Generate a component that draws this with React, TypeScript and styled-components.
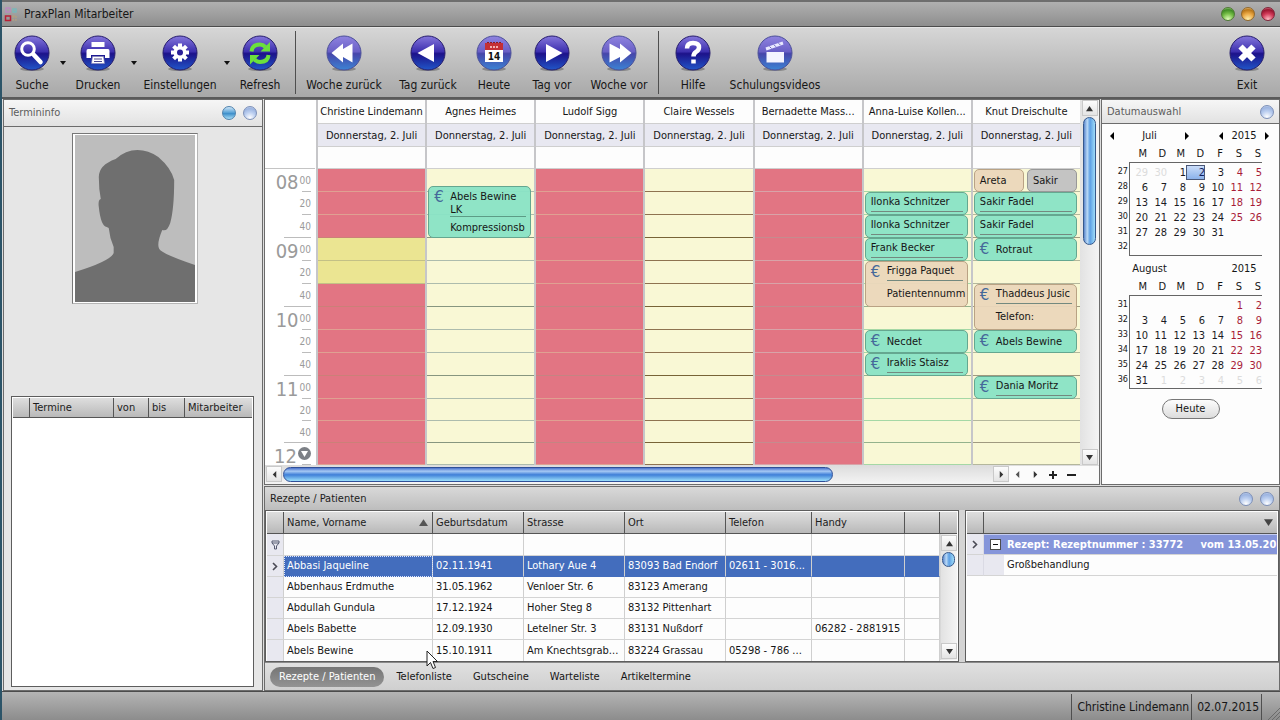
import React from "react";
import styled, { createGlobalStyle, css } from "styled-components";

const UI_FONT = '"DejaVu Sans Condensed", "DejaVu Sans", "Noto Sans", sans-serif';

const GlobalStyle = createGlobalStyle`
  *, *::before, *::after { box-sizing: border-box; }
  body { margin: 0; background: #2c5468; }
  body, button, input, table { font-family: ${UI_FONT}; font-size: 11px; color: #161616; }
  button { margin: 0; padding: 0; border: 0; background: none; }
  h1, h2, p { margin: 0; font-weight: normal; font-size: 11px; }
  table { border-collapse: separate; border-spacing: 0; }
  th, td { padding: 0; font-weight: normal; text-align: left; }
`;

/* ---------- frame ---------- */

const Window = styled.div`
  position: relative;
  display: flex;
  flex-direction: column;
  min-height: 100vh;
  margin-left: 2px;
  background: #dedede;
`;

const TitleBar = styled.header`
  display: flex;
  align-items: center;
  gap: 6px;
  height: 27px;
  padding: 0 5px 0 1px;
  border-top: 2px solid #6e6e6e;
  border-bottom: 1px solid #4c4c4c;
  background: linear-gradient(#b0b0b0, #8e8e8e);
`;

const AppTitle = styled.h1`
  flex: 1;
  font-size: 12px;
  line-height: 18px;
`;

const WindowButtons = styled.div`
  display: flex;
  gap: 6px;
`;

const Ball = styled.button<{ $tone: "green" | "amber" | "red" | "blue" | "pale" }>`
  width: 14px;
  height: 14px;
  border-radius: 50%;
  ${({ $tone }) =>
    ({
      green: css`border: 1px solid #4f7a35; background: radial-gradient(circle at 50% 95%, #e6ffc0, #77bf48 45%, #3f8a25 75%, #bfe8a0);`,
      amber: css`border: 1px solid #91682c; background: radial-gradient(circle at 50% 95%, #fff2b0, #eba945 45%, #b87518 75%, #ffe2a8);`,
      red: css`border: 1px solid #80263a; background: radial-gradient(circle at 50% 95%, #ffc0c8, #d23c5a 45%, #99152f 75%, #f4a0b0);`,
      blue: css`border: 1px solid #5083ad; background: linear-gradient(#cfe6f8, #5da5d8 45%, #3f8fca 55%, #a8def8);`,
      pale: css`border: 1px solid #7d90b8; background: radial-gradient(circle at 50% 90%, #ffffff, #bccff0 45%, #9cb4e0 75%, #dde8fa);`,
    })[$tone]}
`;

/* ---------- toolbar ---------- */

const ToolBar = styled.nav`
  display: flex;
  height: 72px;
  padding: 0 8px 0 6px;
  border-top: 1px solid #e6e6e6;
  border-bottom: 2px solid #5a5a5a;
  background: linear-gradient(#d6d6d6, #a8a8a8);
`;

const ToolButton = styled.button<{ $width: number }>`
  display: flex;
  flex-direction: column;
  align-items: center;
  gap: 5px;
  width: ${({ $width }) => $width}px;
  padding-top: 7px;
  font-size: 12px;
  line-height: 16px;
  white-space: nowrap;
`;

const DropButton = styled.button`
  display: flex;
  align-items: center;
  justify-content: center;
  width: 13px;
`;

const ToolDivider = styled.div`
  width: 1px;
  margin: 3px 8px;
  background: #4f4f4f;
`;

const Spacer = styled.div`
  flex: 1;
`;

const Orb = ({ light, children }: { light?: boolean; children: React.ReactNode }) => {
  const id = React.useId();
  return (
    <svg width="36" height="37" viewBox="0 0 36 37" aria-hidden="true">
      <defs>
        <linearGradient id={id} x1="0" y1="0" x2="0" y2="1">
          <stop offset="0" stopColor={light ? "#8f83e0" : "#8577dc"} />
          <stop offset="0.46" stopColor={light ? "#6a60c6" : "#3c2fae"} />
          <stop offset="0.52" stopColor={light ? "#4646aa" : "#1c128a"} />
          <stop offset="1" stopColor={light ? "#3c83d4" : "#2156c8"} />
        </linearGradient>
      </defs>
      <ellipse cx="18" cy="34" rx="12" ry="2" fill="#555" opacity="0.5" />
      <circle cx="18" cy="18" r="17" fill={`url(#${id})`} stroke={light ? "#4c5099" : "#261d6c"} />
      {children}
    </svg>
  );
};

const Caret = () => (
  <svg width="6" height="4" viewBox="0 0 6 4" aria-hidden="true">
    <path d="M0 0H6L3 4Z" fill="#111" />
  </svg>
);

const SearchGlyph = () => (
  <g fill="none" stroke="#fff" strokeLinecap="round">
    <circle cx="14" cy="14" r="6.300" strokeWidth="3" />
    <path d="M19.500 19.500L26.500 27" strokeWidth="4.500" />
  </g>
);
const PrintGlyph = () => (
  <g>
    <path d="M11.500 7H24.500V12H11.500Z" fill="#fff" />
    <path d="M8 14H28Q29.500 14 29.500 16V23H25V20H11V23H6.500V16Q6.500 14 8 14Z" fill="#fff" />
    <path d="M12.500 21.500H23.500L24.500 28.500H11.500Z" fill="#fff" stroke="#8a86b8" strokeWidth="0.600" />
    <path d="M14 24H22M14 26.500H22" stroke="#4a4790" />
  </g>
);
const GearGlyph = () => (
  <g>
    <g stroke="#fff" strokeWidth="4">
      <path d="M18 8.500V26.500M9 17.500H27M11.600 11.100L24.400 23.900M24.400 11.100L11.600 23.900" />
    </g>
    <circle cx="18" cy="17.500" r="6.500" fill="#fff" />
    <circle cx="18" cy="17.500" r="3" fill="#2a1f98" />
  </g>
);
const RefreshGlyph = () => (
  <g>
    <path d="M9.500 16.500Q10 9.500 18 9.500Q21 9.500 23.500 12" fill="none" stroke="#6be03c" strokeWidth="4" />
    <path d="M28 7V16.500H18.500Z" fill="#6be03c" />
    <path d="M26.500 20Q26 27 18 27Q15 27 12.500 24.500" fill="none" stroke="#6be03c" strokeWidth="4" />
    <path d="M8 29.500V20H17.500Z" fill="#6be03c" />
  </g>
);
const TodayGlyph = () => (
  <g>
    <rect x="9" y="9" width="18" height="18" fill="#fff" />
    <rect x="9" y="8" width="18" height="7" fill="#c42f35" />
    <path d="M11 7.500H25" stroke="#8c1a20" strokeDasharray="2 1" />
    <path d="M14 12H22" stroke="#f0b0b0" strokeWidth="2" strokeDasharray="2 1" />
    <text x="18" y="25" textAnchor="middle" fontSize="10" fontWeight="bold" fill="#111">14</text>
  </g>
);
const ClapperGlyph = () => (
  <g>
    <path d="M9.500 17H27V27.500H9.500Z" fill="#f4f4ff" />
    <path d="M8.500 12.500L25.500 6.500L26.500 9.500L9.500 15.500Z" fill="#e8e8ff" />
    <path d="M12.500 11.500L14.500 13.500M17 9.800L19 11.800M21.500 8.200L23.500 10.200" stroke="#6c64c0" />
  </g>
);

type Tool = { label: string; width: number; drop?: boolean; light?: boolean; glyph: React.ReactNode };

const fill = (d: string) => <path d={d} fill="#fff" />;

const TOOL_GROUPS: Tool[][] = [
  [
    { label: "Suche", width: 48, drop: true, glyph: <SearchGlyph /> },
    { label: "Drucken", width: 58, drop: true, glyph: <PrintGlyph /> },
    { label: "Einstellungen", width: 80, drop: true, glyph: <GearGlyph /> },
    { label: "Refresh", width: 54, glyph: <RefreshGlyph /> },
  ],
  [
    { label: "Woche zurück", width: 80, light: true, glyph: fill("M5.500 18L17 8.500V14L26.500 8.500V27.500L17 22V27.500Z") },
    { label: "Tag zurück", width: 88, glyph: fill("M7.500 18L24 9V27Z") },
    { label: "Heute", width: 44, light: true, glyph: <TodayGlyph /> },
    { label: "Tag vor", width: 72, glyph: fill("M28.500 18L12 9V27Z") },
    { label: "Woche vor", width: 62, light: true, glyph: fill("M30.500 18L19 8.500V14L8.500 8.500V27.500L19 22V27.500Z") },
  ],
  [
    {
      label: "Hilfe",
      width: 52,
      glyph: <path d="M12 13.500Q12 8 18 8Q24 8 24 12.500Q24 15 21 17Q18.500 18.500 18.500 21.500M18.500 24.500V28.500" fill="none" stroke="#fff" strokeWidth="4.500" />,
    },
    { label: "Schulungsvideos", width: 112, light: true, glyph: <ClapperGlyph /> },
  ],
];

/* ---------- panels ---------- */

const Main = styled.main`
  flex: 1;
  display: flex;
  gap: 1px;
  padding-left: 1px;
`;

const Panel = styled.section`
  display: flex;
  flex-direction: column;
  border: 1px solid #6c6c6c;
`;

const InfoPanel = styled(Panel)`
  flex: none;
  width: 260px;
  background: #e6e6e6;
`;

const PanelHeader = styled.div<{ $height: number; $dark?: boolean }>`
  display: flex;
  align-items: center;
  gap: 7px;
  flex: none;
  height: ${({ $height }) => $height}px;
  padding: 0 5px;
  border-bottom: ${({ $dark }) => ($dark ? "0" : "1px solid #6c6c6c")};
  background: ${({ $dark }) => ($dark ? "linear-gradient(#d9d9d9, #bdbdbd)" : "linear-gradient(#f6f6f6, #e2e2e2)")};
`;

const PanelTitle = styled.h2<{ $strong?: boolean }>`
  flex: 1;
  line-height: 16px;
  color: ${({ $strong }) => ($strong ? "#1c1c1c" : "#5c5c5c")};
`;

const PhotoArea = styled.div`
  display: flex;
  justify-content: center;
  align-items: flex-start;
  height: 269px;
  padding: 6px 0 0 4px;
`;

const Photo = styled.div`
  padding: 1px 2px;
  border: 1px solid #777;
  border-right-color: #b5b5b5;
  border-bottom-color: #b5b5b5;
  background: #fff;
  svg { display: block; }
`;

const AppointmentBox = styled.div`
  flex: 1;
  margin: 0 8px 3px 7px;
  padding: 1px;
  border: 1px solid #5d5d5d;
  background: #fff;
`;

const headCell = css`
  height: 22px;
  padding: 0 4px 0 3px;
  border-right: 1px solid #555;
  border-bottom: 1px solid #555;
  background: linear-gradient(#dedede, #b9b9b9);
  color: #1c1c1c;
  white-space: nowrap;
  line-height: 16px;
`;

const InfoTable = styled.table`
  width: 100%;
  table-layout: fixed;
  th { ${headCell} height: 20px; }
  th:last-child { border-right: 0; }
`;

const RightSide = styled.div`
  flex: 1;
  min-width: 0;
  display: flex;
  flex-direction: column;
  gap: 1px;
`;

const TopRow = styled.div`
  flex: 1;
  display: flex;
  gap: 1px;
`;

/* ---------- scheduler ---------- */

const Scheduler = styled(Panel)`
  flex: 1;
  min-width: 0;
  background: #fff;
`;

const SchedulerBody = styled.div`
  flex: 1;
  display: flex;
`;

const TimeRuler = styled.div`
  flex: none;
  width: 51px;
  padding-right: 1px;
`;

const RulerTop = styled.div`
  height: 69px;
  border-bottom: 1px solid #c4c4c4;
`;

const SLOT_ROWS = "repeat(10, 23px) repeat(3, 22px)";

const RulerSlots = styled.div`
  display: grid;
  grid-template-rows: ${SLOT_ROWS};
  padding: 0 4px 0 8px;
`;

const RulerSlot = styled.div<{ $long: boolean }>`
  display: flex;
  align-items: flex-start;
  justify-content: flex-end;
  gap: 1px;
  color: #9a9a9a;
  font-size: 10px;
  line-height: 23px;
  background: linear-gradient(#bcbcbc, #bcbcbc) right bottom / ${({ $long }) => ($long ? 27 : 9)}px 1px no-repeat;
`;

const Hour = styled.span`
  font-size: 20px;
  line-height: 26px;
`;

const MoreBelow = styled.button`
  width: 13px;
  height: 14px;
  margin-top: 3px;
  svg { display: block; }
`;

const DayColumn = styled.div`
  flex: 1;
  min-width: 0;
  border-left: 2px solid #c6c6c9;
`;

const DayHead = styled.div<{ $kind: "name" | "date" | "allDay" }>`
  height: ${({ $kind }) => ({ name: 24, date: 23, allDay: 22 })[$kind]}px;
  border-bottom: 1px solid #cfcfcf;
  background: ${({ $kind }) => ($kind === "date" ? "#e8e8f1" : "#fdfdfd")};
  line-height: 23px;
  text-align: center;
  white-space: nowrap;
`;

const SlotGrid = styled.div`
  display: grid;
  grid-template-rows: ${SLOT_ROWS};
  grid-template-columns: minmax(0, 1fr);
`;

const Slot = styled.div<{ $row: number; $color: string; $line: string }>`
  grid-column: 1;
  grid-row: ${({ $row }) => $row};
  background: ${({ $color }) => $color};
  border-bottom: 1px solid ${({ $line }) => $line};
`;

const CARD_COLORS = {
  green: css`background: rgba(137, 227, 197, 0.95); border-color: #65a790;`,
  beige: css`background: rgba(235, 215, 187, 0.95); border-color: #b9a284;`,
  gray: css`background: rgba(194, 194, 194, 0.97); border-color: #989898;`,
};

const CardSpot = styled.div<{ $row: number; $span: number; $late?: boolean }>`
  grid-column: 1;
  grid-row: ${({ $row, $span }) => `${$row} / span ${$span}`};
  display: flex;
  gap: 3px;
  min-height: 0;
  padding: ${({ $late }) => ($late ? 17 : 0)}px 3px 0 1px;
`;

const Card = styled.article<{ $tone: keyof typeof CARD_COLORS }>`
  flex: 1;
  min-width: 0;
  display: flex;
  padding: 0 4px 0 5px;
  border: 1px solid;
  border-radius: 5px;
  overflow: hidden;
  ${({ $tone }) => CARD_COLORS[$tone]}
`;

const Euro = styled.span`
  flex: none;
  width: 16px;
  font-family: "DejaVu Sans", sans-serif;
  font-size: 15px;
  line-height: 20px;
  color: #46699a;
`;

const CardText = styled.div`
  flex: 1;
  min-width: 0;
  display: flex;
  flex-direction: column;
  white-space: nowrap;
`;

const CardTitle = styled.p<{ $look: "plain" | "ruled" | "stacked" }>`
  ${({ $look }) =>
    ({
      plain: css`flex: 1; line-height: 22px;`,
      ruled: css`border-bottom: 1px solid #73897f; line-height: 18px;`,
      stacked: css`border-bottom: 1px solid #5c9c86; padding-top: 3px; line-height: 13px;`,
    })[$look]}
`;

const CardNote = styled.p`
  flex: 1;
  display: flex;
  align-items: center;
`;

type Appointment = {
  row: number;
  span?: number;
  late?: boolean;
  cards: { tone: keyof typeof CARD_COLORS; euro?: boolean; ruled?: boolean; title: string[]; note?: string }[];
};

type Day = { name: string; busy: boolean; line: string; hourLine: string; open?: number[]; items?: Appointment[] };

const RED = "#e27583";
const CREAM = "#f9f8d5";

const one = (
  row: number,
  title: string,
  opts: { span?: number; tone?: "green" | "beige"; euro?: boolean; ruled?: boolean; note?: string } = {}
): Appointment => ({
  row,
  span: opts.span,
  cards: [{ tone: opts.tone ?? "green", euro: opts.euro, ruled: opts.ruled, title: [title], note: opts.note }],
});

const DAYS: Day[] = [
  { name: "Christine Lindemann", busy: true, line: "#dfa092", hourLine: "#cb8078", open: [4, 5] },
  {
    name: "Agnes Heimes",
    busy: false,
    line: "#adbcad",
    hourLine: "#87967f",
    items: [
      {
        row: 1,
        span: 3,
        late: true,
        cards: [{ tone: "green", euro: true, ruled: true, title: ["Abels Bewine", "LK"], note: "Kompressionsb" }],
      },
    ],
  },
  { name: "Ludolf Sigg", busy: true, line: "#dfa092", hourLine: "#c48482" },
  { name: "Claire Wessels", busy: false, line: "#8f7350", hourLine: "#786437" },
  { name: "Bernadette Mass...", busy: true, line: "#d8a3a8", hourLine: "#c58b8e" },
  {
    name: "Anna-Luise Kollen...",
    busy: false,
    line: "#a5d8a5",
    hourLine: "#94b28c",
    items: [
      one(2, "Ilonka Schnitzer", { ruled: true }),
      one(3, "Ilonka Schnitzer", { ruled: true }),
      one(4, "Frank Becker", { ruled: true }),
      one(5, "Frigga Paquet", { span: 2, tone: "beige", euro: true, ruled: true, note: "Patientennumm" }),
      one(8, "Necdet", { euro: true }),
      one(9, "Iraklis Staisz", { euro: true, ruled: true }),
    ],
  },
  {
    name: "Knut Dreischulte",
    busy: false,
    line: "#b4b79c",
    hourLine: "#a09a80",
    items: [
      { row: 1, cards: [{ tone: "beige", title: ["Areta"] }, { tone: "gray", title: ["Sakir"] }] },
      one(2, "Sakir Fadel", { ruled: true }),
      one(3, "Sakir Fadel", { ruled: true }),
      one(4, "Rotraut", { euro: true }),
      one(6, "Thaddeus Jusic", { span: 2, tone: "beige", euro: true, ruled: true, note: "Telefon:" }),
      one(8, "Abels Bewine", { euro: true }),
      one(10, "Dania Moritz", { euro: true, ruled: true }),
    ],
  },
];

const SLOTS = Array.from({ length: 13 }, (_, i) => i + 1);

/* ---------- scroll bars ---------- */

const VScroll = styled.div`
  flex: none;
  display: flex;
  flex-direction: column;
  width: 19px;
  padding: 0 1px 0 2px;
  background: linear-gradient(90deg, #e2e2e2, #f4f4f4);
`;

const HScroll = styled.div`
  display: flex;
  height: 19px;
  padding: 1px 0 1px 1px;
  background: linear-gradient(#dcdcdc, #f4f4f4);
`;

const ScrollButton = styled.button`
  flex: none;
  display: flex;
  align-items: center;
  justify-content: center;
  width: 16px;
  height: 16px;
  border: 1px solid #c9c9c9;
  background: linear-gradient(#fcfcfc, #e4e4e4);
`;

const VThumb = styled.div<{ $height: number }>`
  width: 13px;
  height: ${({ $height }) => $height}px;
  margin: 1px;
  border: 1px solid #35588c;
  border-radius: 7px;
  background: linear-gradient(90deg, #5b87cc, #b9d9f6 30%, #5c9fe4 55%, #9fdcf8);
`;

const HTrack = styled.div`
  flex: 1;
`;

const HThumb = styled.div`
  width: 77.4%;
  height: 15px;
  margin-top: 1px;
  margin-left: 1px;
  border: 1px solid #2f4f98;
  border-radius: 8px;
  background: linear-gradient(#4c72cc, #a5c8f4 25%, #3f7fd8 52%, #9ce0fb);
`;

const ViewButtons = styled.div`
  display: flex;
  align-items: center;
  width: 90px;
  padding-right: 19px;
  background: #fbfbfb;
`;

const ViewButton = styled.button`
  flex: 1;
  display: flex;
  justify-content: center;
`;

const Arrow = ({ dir, color = "#333", size = 7 }: { dir: "up" | "down" | "left" | "right"; color?: string; size?: number }) => {
  const d = { up: "M0 7L4 1L8 7Z", down: "M0 1L4 7L8 1Z", left: "M6 0L2 4L6 8Z", right: "M2 0L6 4L2 8Z" }[dir];
  return (
    <svg width={size} height={size} viewBox="0 0 8 8" aria-hidden="true">
      <path d={d} fill={color} />
    </svg>
  );
};

/* ---------- date picker ---------- */

const DatePanel = styled(Panel)`
  flex: none;
  width: 179px;
  background: #fdfdfd;
`;

const MonthBar = styled.div`
  display: grid;
  grid-template-columns: 10px 65px 10px 24px 10px 36px 10px;
  align-items: center;
  justify-content: center;
  height: 15px;
  margin: 4px 2px 0 0;
  line-height: 15px;
  text-align: center;
`;

const MonthButton = styled.button`
  display: flex;
  justify-content: center;
`;

const MonthTable = styled.table`
  margin: 3px 17px 1px 14px;
  line-height: 15px;
  thead td, thead th { height: 16px; vertical-align: top; }
  thead th { padding-right: 1px; text-align: right; }
  tbody tr:first-child > * { padding-top: 2px; border-top: 1px solid #666; }
  tbody tr:first-child > th { border-top-color: transparent; }
  tbody tr:last-child td { border-bottom: 1px solid #666; }
  tbody th + td { border-left: 1px solid #666; }
`;

const WeekNumber = styled.th`
  && {
    width: 13px;
    padding-right: 1px;
    font-size: 9px;
    line-height: 12px;
    text-align: right;
    vertical-align: top;
  }
`;

const DayCell = styled.td<{ $tone: "normal" | "weekend" | "other" | "today" }>`
  && {
    width: 19px;
    text-align: right;
    color: ${({ $tone }) => ({ normal: "#1c1c24", weekend: "#a81c38", other: "#dcdcdc", today: "#10205c" })[$tone]};
  }
`;

const DayNumber = styled.span<{ $today: boolean }>`
  display: block;
  height: 15px;
  line-height: 15px;
  ${({ $today }) => $today && css`outline: 1px solid #4b5878; outline-offset: -1px; background: linear-gradient(#cfe0fa, #86aeea);`}
`;

const TodayRow = styled.div`
  display: flex;
  justify-content: center;
  padding-top: 9px;
`;

const TodayButton = styled.button`
  width: 58px;
  height: 20px;
  border: 1px solid #777;
  border-radius: 10px;
  background: linear-gradient(#fdfdfd, #dcdcdc);
  line-height: 16px;
`;

const WEEKDAYS = ["M", "D", "M", "D", "F", "S", "S"];

type Month = { name: string; firstWeek: number; lead: (number | null)[]; days: number; trail: number; arrows: boolean };

const MONTHS: Month[] = [
  { name: "Juli", firstWeek: 27, lead: [29, 30], days: 31, trail: 0, arrows: true },
  { name: "August", firstWeek: 31, lead: [null, null, null, null, null], days: 31, trail: 6, arrows: false },
];

const MonthView = ({ month }: { month: Month }) => {
  const cells: { value: number | null; other: boolean }[] = [
    ...month.lead.map((value) => ({ value, other: true })),
    ...Array.from({ length: month.days }, (_, i) => ({ value: i + 1, other: false })),
    ...Array.from({ length: month.trail }, (_, i) => ({ value: i + 1, other: true })),
  ];
  while (cells.length < 42) cells.push({ value: null, other: true });
  return (
    <>
      <MonthBar>
        {month.arrows ? <MonthButton aria-label="Voriger Monat"><Arrow dir="left" color="#000" size={8} /></MonthButton> : <span />}
        <span>{month.name}</span>
        {month.arrows ? <MonthButton aria-label="Nächster Monat"><Arrow dir="right" color="#000" size={8} /></MonthButton> : <span />}
        <span />
        {month.arrows ? <MonthButton aria-label="Voriges Jahr"><Arrow dir="left" color="#000" size={8} /></MonthButton> : <span />}
        <span>2015</span>
        {month.arrows ? <MonthButton aria-label="Nächstes Jahr"><Arrow dir="right" color="#000" size={8} /></MonthButton> : <span />}
      </MonthBar>
      <MonthTable>
        <thead>
          <tr>
            <td />
            {WEEKDAYS.map((d, i) => <th key={i} scope="col">{d}</th>)}
          </tr>
        </thead>
        <tbody>
          {[0, 1, 2, 3, 4, 5].map((week) => (
            <tr key={week}>
              <WeekNumber scope="row">{month.firstWeek + week}</WeekNumber>
              {cells.slice(week * 7, week * 7 + 7).map((cell, i) => {
                const today = month.name === "Juli" && cell.value === 2 && !cell.other;
                return (
                  <DayCell key={i} $tone={today ? "today" : cell.other ? "other" : i > 4 ? "weekend" : "normal"}>
                    <DayNumber $today={today}>{cell.value}</DayNumber>
                  </DayCell>
                );
              })}
            </tr>
          ))}
        </tbody>
      </MonthTable>
    </>
  );
};

/* ---------- patients ---------- */

const PatientPanel = styled(Panel)`
  flex: none;
  background: #d4d4d4;
`;

const Grids = styled.div`
  display: flex;
  gap: 6px;
`;

const GridBox = styled.div<{ $width?: number }>`
  flex: ${({ $width }) => ($width ? "none" : "1")};
  ${({ $width }) => $width && css`width: ${$width}px;`}
  min-width: 0;
  display: flex;
  height: 152px;
  padding: 1px;
  border: 1px solid #5d5d5d;
  background: #fdfdfd;
  overflow: hidden;
`;

const TableWrap = styled.div`
  flex: 1;
  min-width: 0;
`;

const PatientTable = styled.table`
  width: 100%;
  table-layout: fixed;
  th { ${headCell} }
  td {
    height: 21px;
    padding: 0 4px 0 3px;
    border-right: 1px solid #cfcfcf;
    border-bottom: 1px solid #d4d4d4;
    line-height: 16px;
    white-space: nowrap;
    overflow: hidden;
  }
  td:first-child { padding: 0; background: #e8e8f0; }
  td:first-child svg { display: block; margin: 0 auto; }
  tbody tr:last-child td { border-bottom: 0; }
`;

const HeadFlex = styled.span`
  display: flex;
  align-items: center;
  justify-content: space-between;
`;

const FilterRow = styled.tr`
  && td { height: 22px; }
`;

const FilterInput = styled.input`
  display: block;
  width: 100%;
  height: 18px;
  padding: 0;
  border: 0;
  background: transparent;
`;

const PatientRow = styled.tr<{ $selected: boolean }>`
  ${({ $selected }) =>
    $selected &&
    css`
      && td:not(:first-child) { background: #436dbd; color: #fff; border-bottom-color: #436dbd; }
      && td:nth-child(2) { outline: 1px dotted #dce6ff; outline-offset: -1px; }
    `}
`;

const ScrollColumn = styled.div`
  flex: none;
  display: flex;
  flex-direction: column;
  width: 17px;
`;

const ScrollHead = styled.div`
  ${headCell}
  border-right: 0;
`;

const GridScroll = styled(VScroll)`
  flex: 1;
  width: 17px;
  border-left: 1px solid #d8d8d8;
  padding: 1px 0;
`;

const RecipeTable = styled.table`
  width: 100%;
  table-layout: fixed;
  th { ${headCell} }
  th:last-child { border-right: 0; }
  td { height: 21px; border-bottom: 1px solid #d4d4d4; line-height: 16px; white-space: nowrap; overflow: hidden; }
  td:first-child { background: #e8e8f0; border-right: 1px solid #dadae4; }
  td:first-child svg { display: block; margin: 0 auto; }
`;

const GroupCell = styled.td`
  && {
    padding-left: 6px;
    background: #8595da;
    border-top: 1px solid #c4ccf0;
    color: #fff;
    font-weight: bold;
  }
`;

const GroupLine = styled.span`
  display: flex;
  align-items: center;
  white-space: pre;
`;

const Expander = styled.button`
  flex: none;
  display: flex;
  align-items: center;
  justify-content: center;
  width: 11px;
  height: 11px;
  margin-right: 6px;
  border: 1px solid #4d4d4d;
  background: #fff;
`;

const Minus = styled.span`
  width: 5px;
  height: 1px;
  background: #111;
`;

const IndentCell = styled.td`
  && { background: #e8e8f0; }
`;

const DetailCell = styled.td`
  padding-left: 3px;
`;

const TabBar = styled.div`
  display: flex;
  align-items: center;
  height: 28px;
  padding: 0 5px;
  border-top: 1px solid #8a8a8a;
  background: linear-gradient(#e0e0e0, #cfcfcf);
`;

const Tab = styled.button<{ $active?: boolean }>`
  height: 20px;
  padding: 0 9px;
  margin-right: 3px;
  border-radius: 10px;
  line-height: 16px;
  ${({ $active }) => $active && css`background: linear-gradient(#757575, #939393); color: #fff;`}
`;

const PATIENTS = [
  ["Abbasi Jaqueline", "02.11.1941", "Lothary Aue 4", "83093 Bad Endorf", "02611 - 3016...", ""],
  ["Abbenhaus Erdmuthe", "31.05.1962", "Venloer Str. 6", "83123 Amerang", "", ""],
  ["Abdullah Gundula", "17.12.1924", "Hoher Steg 8", "83132 Pittenhart", "", ""],
  ["Abels Babette", "12.09.1930", "Letelner Str. 3", "83131 Nußdorf", "", "06282 - 2881915"],
  ["Abels Bewine", "15.10.1911", "Am Knechtsgrab...", "83224 Grassau", "05298 - 786 ...", ""],
];

const COLUMNS = [
  { label: "Name, Vorname", width: 149 },
  { label: "Geburtsdatum", width: 91 },
  { label: "Strasse", width: 101 },
  { label: "Ort", width: 101 },
  { label: "Telefon", width: 86 },
  { label: "Handy", width: 93 },
];

const Chevron = () => (
  <svg width="6" height="9" viewBox="0 0 6 9" aria-hidden="true">
    <path d="M1 1L4.500 4.500L1 8" fill="none" stroke="#4a4a55" strokeWidth="1.600" />
  </svg>
);

/* ---------- status bar ---------- */

const StatusBar = styled.footer`
  display: flex;
  justify-content: flex-end;
  height: 29px;
  border-top: 1px solid #4c4c4c;
  background: linear-gradient(#b4b4b4, #8c8c8c);
`;

const StatusItem = styled.div`
  margin-top: 2px;
  padding: 0 2px 0 5px;
  border-left: 1px solid #4f4f4f;
  font-size: 12px;
  line-height: 26px;
`;

const Grip = styled.div`
  display: flex;
  align-items: flex-end;
  justify-content: flex-end;
  width: 19px;
  margin-top: 2px;
  border-left: 1px solid #4f4f4f;
`;

const Pointer = styled.svg`
  position: absolute;
  left: 424px;
  top: 650px;
  pointer-events: none;
`;

export default function App() {
  return (
    <>
      <GlobalStyle />
      <Window>
        <TitleBar>
          <svg width="15" height="17" viewBox="0 0 15 17" aria-hidden="true">
            <g fill="none" strokeWidth="1.500">
              <path d="M3 2H7V6H3Z" stroke="#b98bbd" />
              <path d="M10 3H13V6H10Z" stroke="#79b8ba" />
              <path d="M10 10H13V14H10Z" stroke="#b3a080" strokeDasharray="2 1" />
              <path d="M2.500 10H7.500V14.500H2.500Z" stroke="#b81f35" />
            </g>
          </svg>
          <AppTitle>PraxPlan Mitarbeiter</AppTitle>
          <WindowButtons>
            <Ball $tone="green" aria-label="Minimieren" />
            <Ball $tone="amber" aria-label="Maximieren" />
            <Ball $tone="red" aria-label="Schließen" />
          </WindowButtons>
        </TitleBar>

        <ToolBar>
          {TOOL_GROUPS.map((group, g) => (
            <React.Fragment key={g}>
              {g > 0 && <ToolDivider />}
              {group.map((tool) => (
                <React.Fragment key={tool.label}>
                  <ToolButton $width={tool.width}>
                    <Orb light={tool.light}>{tool.glyph}</Orb>
                    {tool.label}
                  </ToolButton>
                  {tool.drop && <DropButton aria-label={`${tool.label} Optionen`}><Caret /></DropButton>}
                </React.Fragment>
              ))}
            </React.Fragment>
          ))}
          <Spacer />
          <ToolButton $width={50}>
            <Orb>
              <path d="M11.500 11.500L24.500 24.500M24.500 11.500L11.500 24.500" stroke="#fff" strokeWidth="6" />
            </Orb>
            Exit
          </ToolButton>
        </ToolBar>

        <Main>
          <InfoPanel>
            <PanelHeader $height={27}>
              <PanelTitle>Termininfo</PanelTitle>
              <Ball $tone="blue" aria-label="Minimieren" />
              <Ball $tone="pale" aria-label="Anheften" />
            </PanelHeader>
            <PhotoArea>
              <Photo>
                <svg width="120" height="167" viewBox="0 0 121 167" preserveAspectRatio="none" role="img" aria-label="Patientenfoto">
                  <rect width="121" height="167" fill="#bdbdbd" />
                  <path
                    d="M63 15Q51 15 41 24Q24 30 24 42Q24 54 26 64Q23 65 24 72Q26 91 32 92L34 93Q35 103 39 112V118Q36 126 0 137V167H121V130Q88 119 85 114Q82 109 88 95Q93 97 96 88Q100 74 100 45Q97 33 84 22Q74 15 63 15Z"
                    fill="#6f6f6f"
                  />
                </svg>
              </Photo>
            </PhotoArea>
            <AppointmentBox>
              <InfoTable>
                <colgroup>
                  <col width="17" /><col width="84" /><col width="35" /><col width="36" /><col />
                </colgroup>
                <thead>
                  <tr>
                    <th aria-label="Auswahl" />
                    <th scope="col">Termine</th>
                    <th scope="col">von</th>
                    <th scope="col">bis</th>
                    <th scope="col">Mitarbeiter</th>
                  </tr>
                </thead>
              </InfoTable>
            </AppointmentBox>
          </InfoPanel>

          <RightSide>
            <TopRow>
              <Scheduler>
                <SchedulerBody>
                  <TimeRuler>
                    <RulerTop />
                    <RulerSlots>
                      {SLOTS.map((n) => {
                        const onHour = (n - 1) % 3 === 0;
                        return (
                          <RulerSlot key={n} $long={n % 3 === 0}>
                            {onHour && <Hour>{String(8 + (n - 1) / 3).padStart(2, "0")}</Hour>}
                            {n === 13 ? (
                              <MoreBelow aria-label="Weitere Termine">
                                <svg width="13" height="13" viewBox="0 0 13 13">
                                  <circle cx="6.500" cy="6.500" r="6.500" fill="#7c8086" />
                                  <path d="M3 4H10L6.500 10Z" fill="#fff" />
                                </svg>
                              </MoreBelow>
                            ) : (
                              <span>{["00", "20", "40"][(n - 1) % 3]}</span>
                            )}
                          </RulerSlot>
                        );
                      })}
                    </RulerSlots>
                  </TimeRuler>
                  {DAYS.map((day) => (
                    <DayColumn key={day.name}>
                      <DayHead $kind="name">{day.name}</DayHead>
                      <DayHead $kind="date">Donnerstag, 2. Juli</DayHead>
                      <DayHead $kind="allDay" />
                      <SlotGrid>
                        {SLOTS.map((n) => {
                          const open = day.open?.includes(n);
                          return (
                            <Slot
                              key={n}
                              $row={n}
                              $color={open ? "#ebe592" : day.busy ? RED : CREAM}
                              $line={open ? "#c3c086" : n % 3 === 0 ? day.hourLine : day.line}
                            />
                          );
                        })}
                        {day.items?.map((item) => (
                          <CardSpot key={item.row} $row={item.row} $span={item.span ?? 1} $late={item.late}>
                            {item.cards.map((card) => (
                              <Card key={card.title[0]} $tone={card.tone}>
                                {card.euro && <Euro>€</Euro>}
                                <CardText>
                                  <CardTitle $look={card.title.length > 1 ? "stacked" : card.ruled ? "ruled" : "plain"}>
                                    {card.title.map((line, i) => (
                                      <React.Fragment key={line}>
                                        {i > 0 && <br />}
                                        {line}
                                      </React.Fragment>
                                    ))}
                                  </CardTitle>
                                  {card.note && <CardNote>{card.note}</CardNote>}
                                </CardText>
                              </Card>
                            ))}
                          </CardSpot>
                        ))}
                      </SlotGrid>
                    </DayColumn>
                  ))}
                  <VScroll>
                    <ScrollButton aria-label="Nach oben"><Arrow dir="up" /></ScrollButton>
                    <VThumb $height={128} />
                    <Spacer />
                    <ScrollButton aria-label="Nach unten"><Arrow dir="down" /></ScrollButton>
                  </VScroll>
                </SchedulerBody>
                <HScroll>
                  <ScrollButton aria-label="Nach links"><Arrow dir="left" /></ScrollButton>
                  <HTrack><HThumb /></HTrack>
                  <ScrollButton aria-label="Nach rechts"><Arrow dir="right" /></ScrollButton>
                  <ViewButtons>
                    <ViewButton aria-label="Zurück"><Arrow dir="left" color="#555" /></ViewButton>
                    <ViewButton aria-label="Vor"><Arrow dir="right" /></ViewButton>
                    <ViewButton aria-label="Mehr Spalten">
                      <svg width="8" height="8" viewBox="0 0 8 8"><path d="M4 0V8M0 4H8" stroke="#222" strokeWidth="2" /></svg>
                    </ViewButton>
                    <ViewButton aria-label="Weniger Spalten">
                      <svg width="9" height="8" viewBox="0 0 9 8"><path d="M0 4H9" stroke="#222" strokeWidth="2" /></svg>
                    </ViewButton>
                  </ViewButtons>
                </HScroll>
              </Scheduler>

              <DatePanel>
                <PanelHeader $height={24}>
                  <PanelTitle>Datumauswahl</PanelTitle>
                  <Ball $tone="pale" aria-label="Anheften" />
                </PanelHeader>
                {MONTHS.map((month) => <MonthView key={month.name} month={month} />)}
                <TodayRow><TodayButton>Heute</TodayButton></TodayRow>
              </DatePanel>
            </TopRow>

            <PatientPanel>
              <PanelHeader $height={23} $dark>
                <PanelTitle $strong>Rezepte / Patienten</PanelTitle>
                <Ball $tone="pale" aria-label="Minimieren" />
                <Ball $tone="pale" aria-label="Anheften" />
              </PanelHeader>
              <Grids>
                <GridBox>
                  <TableWrap>
                    <PatientTable>
                      <colgroup>
                        <col width="17" />
                        {COLUMNS.map((c) => <col key={c.label} width={c.width} />)}
                        <col />
                      </colgroup>
                      <thead>
                        <tr>
                          <th aria-label="Auswahl" />
                          {COLUMNS.map((c, i) => (
                            <th key={c.label} scope="col">
                              <HeadFlex>{c.label}{i === 0 && <Arrow dir="up" color="#555" size={9} />}</HeadFlex>
                            </th>
                          ))}
                          <th aria-label="Weitere" />
                        </tr>
                      </thead>
                      <tbody>
                        <FilterRow>
                          <td>
                            <svg width="9" height="10" viewBox="0 0 9 10" aria-hidden="true">
                              <path d="M1 1H8V3L5.500 6V9L3.500 9V6L1 3ZM1 3H8" fill="none" stroke="#555a70" />
                            </svg>
                          </td>
                          {COLUMNS.map((c) => <td key={c.label}><FilterInput aria-label={`Filter ${c.label}`} /></td>)}
                          <td />
                        </FilterRow>
                        {PATIENTS.map((patient, r) => (
                          <PatientRow key={patient[0]} $selected={r === 0}>
                            <td>{r === 0 && <Chevron />}</td>
                            {patient.map((value, c) => <td key={c}>{value}</td>)}
                            <td />
                          </PatientRow>
                        ))}
                      </tbody>
                    </PatientTable>
                  </TableWrap>
                  <ScrollColumn>
                    <ScrollHead />
                    <GridScroll>
                      <ScrollButton aria-label="Nach oben"><Arrow dir="up" /></ScrollButton>
                      <VThumb $height={15} />
                      <Spacer />
                      <ScrollButton aria-label="Nach unten"><Arrow dir="down" /></ScrollButton>
                    </GridScroll>
                  </ScrollColumn>
                </GridBox>
                <GridBox $width={314}>
                  <TableWrap>
                    <RecipeTable>
                      <colgroup><col width="17" /><col width="20" /><col /></colgroup>
                      <thead>
                        <tr>
                          <th aria-label="Auswahl" />
                          <th colSpan={2} scope="col" aria-label="Rezept">
                            <HeadFlex><span /><Arrow dir="down" color="#444" size={9} /></HeadFlex>
                          </th>
                        </tr>
                      </thead>
                      <tbody>
                        <tr>
                          <td><Chevron /></td>
                          <GroupCell colSpan={2}>
                            <GroupLine>
                              <Expander aria-label="Gruppe schließen"><Minus /></Expander>
                              {"Rezept: Rezeptnummer : 33772     vom 13.05.2015"}
                            </GroupLine>
                          </GroupCell>
                        </tr>
                        <tr>
                          <td />
                          <IndentCell />
                          <DetailCell>Großbehandlung</DetailCell>
                        </tr>
                      </tbody>
                    </RecipeTable>
                  </TableWrap>
                </GridBox>
              </Grids>
              <TabBar>
                <Tab $active>Rezepte / Patienten</Tab>
                <Tab>Telefonliste</Tab>
                <Tab>Gutscheine</Tab>
                <Tab>Warteliste</Tab>
                <Tab>Artikeltermine</Tab>
              </TabBar>
            </PatientPanel>
          </RightSide>
        </Main>

        <StatusBar>
          <StatusItem>Christine Lindemann</StatusItem>
          <StatusItem>02.07.2015</StatusItem>
          <Grip>
            <svg width="12" height="12" viewBox="0 0 12 12" aria-hidden="true">
              <path d="M0 12L12 0M4 12L12 4M8 12L12 8" stroke="#6a6a6a" />
            </svg>
          </Grip>
        </StatusBar>

        <Pointer width="13" height="20" viewBox="0 0 13 20" aria-hidden="true">
          <path d="M1 1V16L4.500 12.500L7 18.500L9.500 17.500L7 11.500H11.500Z" fill="#fff" stroke="#222" />
        </Pointer>
      </Window>
    </>
  );
}
